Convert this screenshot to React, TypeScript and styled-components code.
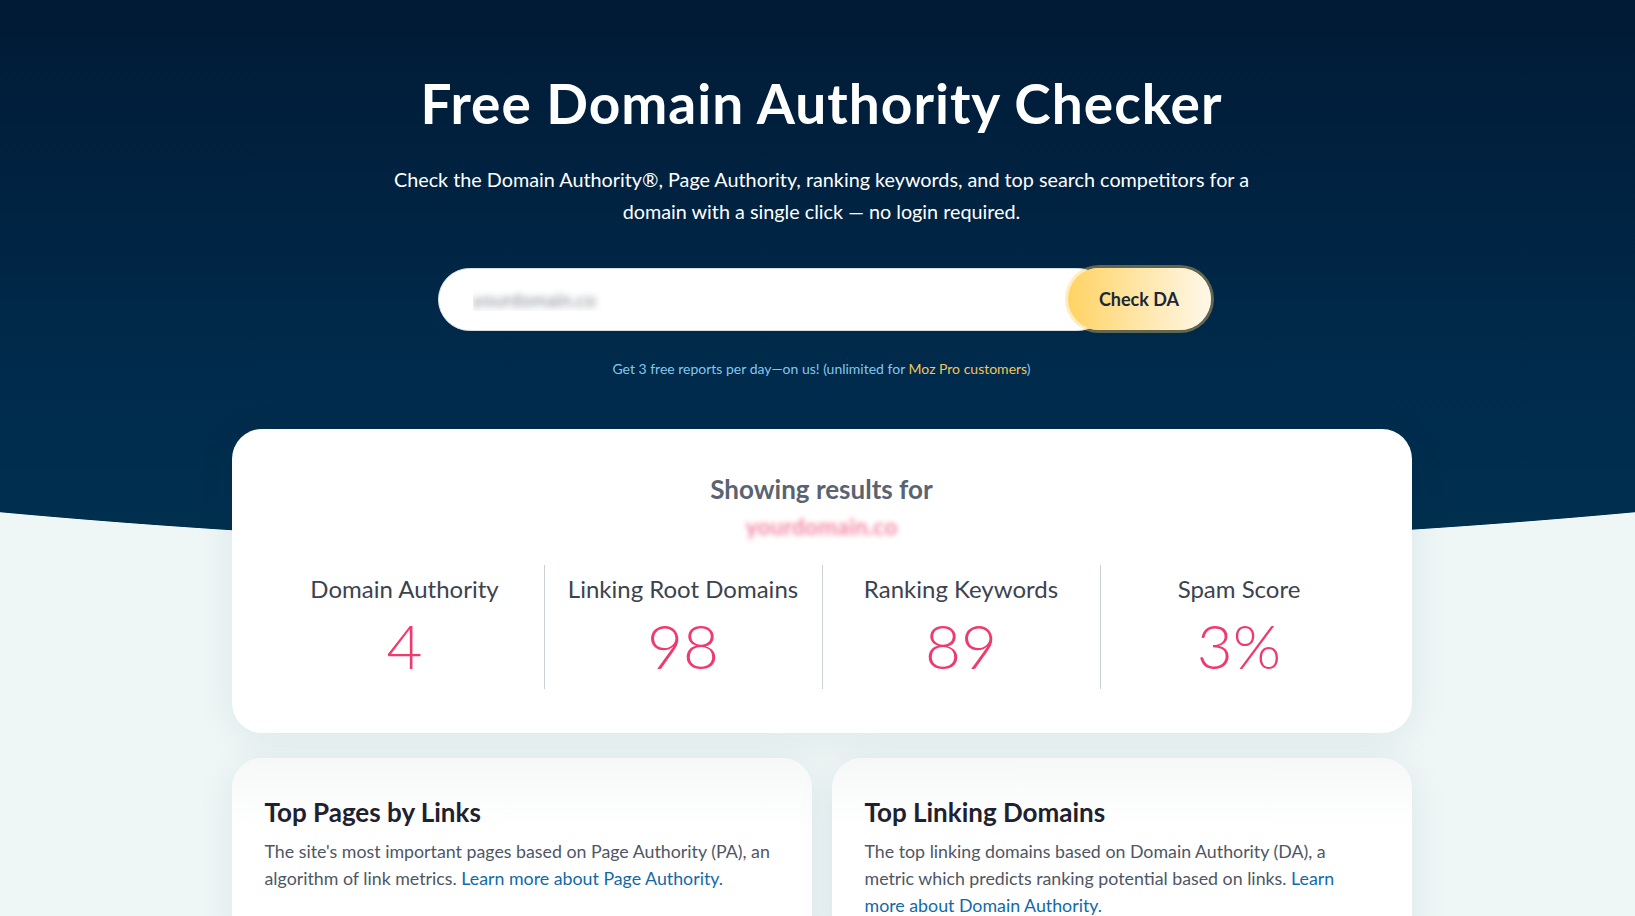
import { FC } from "react";
import styled, { createGlobalStyle } from "styled-components";

const GlobalStyle = createGlobalStyle`
  *, *::before, *::after {
    box-sizing: border-box;
  }

  body {
    margin: 0;
    background: #eef6f6;
    font-family: Lato, "Noto Sans", "Liberation Sans", sans-serif;
    -webkit-font-smoothing: antialiased;
  }
`;

// dark hero with an elliptical bottom edge, painted behind the whole page
const Page = styled.div`
  min-height: 916px;
  padding: 71px 0 40px 8px;
  background:
    radial-gradient(2285px 549px at 50% 0, transparent 99.85%, #eef6f6 100%),
    linear-gradient(180deg, #011a35 0, #002b4c 380px, #00304f 549px, #eef6f6 549px);
  overflow: hidden;
`;

const Hero = styled.header`
  text-align: center;
  color: #fff;
`;

const Title = styled.h1`
  margin: 0;
  font-size: 55px;
  line-height: 64px;
  font-weight: 700;
  letter-spacing: 1px;
`;

const Lead = styled.p`
  max-width: 870px;
  margin: 28px auto 0;
  font-size: 19.8px;
  line-height: 32px;
  font-weight: 400;
`;

const SearchForm = styled.form`
  display: flex;
  align-items: center;
  width: 768px;
  margin: 38px auto 0;
`;

const DomainInput = styled.input`
  flex: 1;
  min-width: 0;
  height: 63px;
  margin-right: -44px;
  padding: 0 60px 0 34px;
  border: 1px solid #d9dee3;
  border-radius: 32px;
  background: #fff;
  font-family: inherit;
  font-size: 19px;
  color: transparent;
  text-shadow: 0 0 6px rgba(60, 70, 85, 0.6);
  outline: none;
`;

const CheckButton = styled.button`
  position: relative;
  z-index: 1;
  flex: 0 0 149px;
  height: 68px;
  margin-right: -8px;
  border: 3px solid rgba(255, 208, 92, 0.38);
  border-radius: 34px;
  background-clip: padding-box;
  background-image: linear-gradient(90deg, #ffd363 0%, #ffe6a8 50%, #fff8ea 100%);
  font-family: inherit;
  font-size: 18px;
  font-weight: 700;
  color: #1b2736;
  cursor: pointer;
`;

const Note = styled.p`
  margin: 26px 0 0;
  font-size: 14px;
  line-height: 20px;
  color: #82c8ee;
`;

const NoteLink = styled.a`
  color: #f4c55c;
  text-decoration: none;
`;

const Card = styled.section`
  width: 1180px;
  margin: 50px auto 0;
  padding: 45px 34px 44px;
  background: #fff;
  border-radius: 30px;
  box-shadow: 0 6px 40px rgba(10, 50, 70, 0.07);
  text-align: center;
`;

const ResultsFor = styled.h2`
  margin: 0;
  font-size: 26px;
  line-height: 31px;
  font-weight: 700;
  color: #5a6371;
`;

const Redacted = styled.div`
  display: inline-block;
  margin-top: 7px;
  font-size: 23px;
  line-height: 28px;
  font-weight: 700;
  color: transparent;
  text-shadow: 0 0 5px rgba(240, 95, 135, 0.75);
  user-select: none;
`;

const Stats = styled.div`
  display: grid;
  grid-template-columns: repeat(4, 1fr);
  margin-top: 25px;
`;

const Stat = styled.div`
  padding: 9px 0 7px;

  & + & {
    border-left: 1px solid #c9d1d5;
  }
`;

const StatLabel = styled.div`
  font-size: 24px;
  line-height: 29px;
  color: #3c434e;
`;

const StatValue = styled.div`
  margin-top: 5px;
  font-size: 62px;
  line-height: 74px;
  font-weight: 300;
  color: #ef3a6e;
`;

const Panels = styled.div`
  display: grid;
  grid-template-columns: 1fr 1fr;
  gap: 20px;
  width: 1180px;
  margin: 25px auto 0;
`;

const Panel = styled.section`
  min-height: 200px;
  padding: 39px 35px 30px 33px;
  border-radius: 30px;
  background: linear-gradient(180deg, #f6f8f8 0, #ffffff 70px);
  box-shadow: 0 6px 40px rgba(10, 50, 70, 0.07);
`;

const PanelTitle = styled.h3`
  margin: 0;
  font-size: 26px;
  line-height: 31px;
  font-weight: 700;
  color: #1d2130;
`;

const PanelText = styled.p`
  margin: 10px 0 0;
  font-size: 17.8px;
  line-height: 27px;
  color: #4e5665;
`;

const TextLink = styled.a`
  color: #1169a8;
  text-decoration: none;
`;

const stats = [
  { label: "Domain Authority", value: "4" },
  { label: "Linking Root Domains", value: "98" },
  { label: "Ranking Keywords", value: "89" },
  { label: "Spam Score", value: "3%" },
];

const App: FC = () => {
  return (
    <>
      <GlobalStyle />
      <Page>
        <Hero>
          <Title>Free Domain Authority Checker</Title>
          <Lead>
            Check the Domain Authority®, Page Authority, ranking keywords, and
            top search competitors for a domain with a single click — no login
            required.
          </Lead>
          <SearchForm onSubmit={(e) => e.preventDefault()}>
            <DomainInput defaultValue="yourdomain.co" aria-label="Domain" />
            <CheckButton type="submit">Check DA</CheckButton>
          </SearchForm>
          <Note>
            Get 3 free reports per day—on us! (unlimited for{" "}
            <NoteLink href="#">Moz Pro customers</NoteLink>)
          </Note>
        </Hero>

        <Card>
          <ResultsFor>Showing results for</ResultsFor>
          <Redacted aria-hidden>yourdomain.co</Redacted>
          <Stats>
            {stats.map((s) => (
              <Stat key={s.label}>
                <StatLabel>{s.label}</StatLabel>
                <StatValue>{s.value}</StatValue>
              </Stat>
            ))}
          </Stats>
        </Card>

        <Panels>
          <Panel>
            <PanelTitle>Top Pages by Links</PanelTitle>
            <PanelText>
              The site's most important pages based on Page Authority (PA), an
              algorithm of link metrics.{" "}
              <TextLink href="#">Learn more about Page Authority.</TextLink>
            </PanelText>
          </Panel>
          <Panel>
            <PanelTitle>Top Linking Domains</PanelTitle>
            <PanelText>
              The top linking domains based on Domain Authority (DA), a metric
              which predicts ranking potential based on links.{" "}
              <TextLink href="#">Learn more about Domain Authority.</TextLink>
            </PanelText>
          </Panel>
        </Panels>
      </Page>
    </>
  );
};

export default App;
